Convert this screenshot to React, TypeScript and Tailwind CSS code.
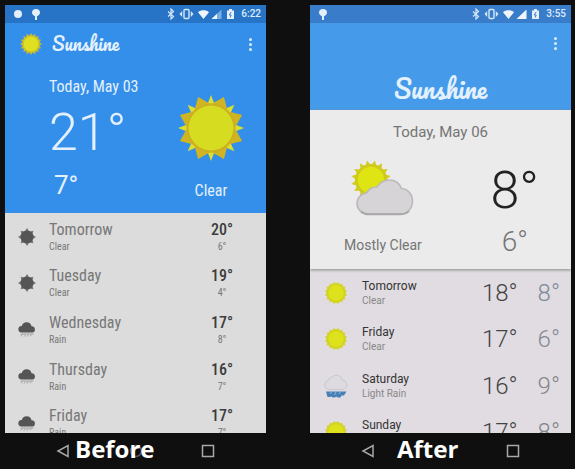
import type { ReactNode } from 'react';

const CONDENSED = "font-['Roboto_Condensed','Roboto','Liberation_Sans',sans-serif]";

type Kind = 'sun' | 'rain';

function spikes(count: number, outer: number, inner: number, turn: number) {
  const points: string[] = [];
  for (let i = 0; i < count * 2; i++) {
    const r = i % 2 === 0 ? outer : inner;
    const a = (Math.PI * i) / count + turn;
    points.push(`${(50 + r * Math.sin(a)).toFixed(2)},${(50 - r * Math.cos(a)).toFixed(2)}`);
  }
  return points.join(' ');
}

function BigSun() {
  return (
    <svg viewBox="0 0 100 100" className="size-[66px]" aria-hidden="true">
      <polygon points={spikes(8, 50, 26, 0)} fill="#dcdf2c" />
      <polygon points={spikes(8, 51, 36, Math.PI / 8)} fill="#d0b422" />
      <circle cx="50" cy="50" r="37" fill="#cdb022" />
      <circle cx="50" cy="50" r="34" fill="#d6dc20" />
    </svg>
  );
}

function LogoSun() {
  return (
    <svg viewBox="0 0 100 100" className="size-[22px]" aria-hidden="true">
      <polygon points={spikes(16, 50, 39, 0)} fill="#c2b83a" />
      <circle cx="50" cy="50" r="38" fill="#d2c426" />
      <circle cx="50" cy="50" r="33" fill="#dfe021" />
    </svg>
  );
}

function GreySun() {
  return (
    <svg viewBox="0 0 100 100" className="size-[18px]" aria-hidden="true">
      <polygon points={spikes(8, 50, 33, 0)} fill="#777" />
      <circle cx="50" cy="50" r="36" fill="#555" />
    </svg>
  );
}

function GreyRain() {
  return (
    <svg viewBox="0 0 18 17" className="h-[17px] w-[18px]" aria-hidden="true">
      <path d="M3.500 11.500a3.300 3.300 0 0 1 .3-6.600A5 5 0 0 1 13.500 5.200a3.200 3.200 0 0 1 1 6.300z" fill="#555" />
      <path d="M2.500 13h13M3 15.200l1.500-1.800M6 15.600l1.500-2M9 15.600l1.500-2M12 15.200l1.500-1.800" stroke="#a2a2a2" strokeWidth="1" fill="none" />
    </svg>
  );
}

function YellowSun() {
  return (
    <svg viewBox="0 0 100 100" className="size-[22px]" aria-hidden="true">
      <polygon points={spikes(16, 51, 43, Math.PI / 16)} fill="#d4d23a" />
      <circle cx="50" cy="50" r="43" fill="#d2d420" />
      <circle cx="50" cy="50" r="35" fill="#dde21c" />
    </svg>
  );
}

function BlueRain() {
  return (
    <svg viewBox="0 0 26 26" className="size-[26px]" aria-hidden="true">
      <path d="M5.500 16.500a4.500 4.500 0 0 1-.5-8.800 4 4 0 0 1 4-3.400 5.600 5.600 0 0 1 10 2.700 4.900 4.900 0 0 1 1.500 9.500z" fill="#dedbe0" stroke="#c8c6cf" strokeWidth="1" />
      <path d="M3 18.500h20.500l-2.500 4h-2.500l-1 2h-3l-1-1-2 1h-2l-1-1-2 .5H4.500z" fill="#4680b6" />
      <path d="M7 21l1.500-2M11.500 22l1.500-3M16 21l1.500-2" stroke="#a9c4dd" strokeWidth=".8" />
    </svg>
  );
}

function PartlyCloudy() {
  return (
    <svg viewBox="0 0 64 56" className="h-14 w-16" aria-hidden="true">
      <svg x="0" y="0" width="40" height="40" viewBox="0 0 100 100">
        <polygon points={spikes(16, 50, 37, Math.PI / 16)} fill="#d3cc25" />
        <circle cx="50" cy="50" r="40" fill="#d0ca1c" />
        <circle cx="50" cy="50" r="33" fill="#dfe413" />
      </svg>
      <path d="M18 54C10.500 54 6 49 6 43.500c0-6 4.500-10 9.500-10.500C18 28.500 22 27 26 27 29 22.500 33 20 38 20c6 0 10.500 3 12.500 8.500C57 29 61.500 34.500 61.500 41c0 8-5.500 13-12.500 13z" fill="#d6d4d6" stroke="#bbb9bc" strokeWidth="1.600" />
      <path d="M10 51.500c2 2 5 2.800 8 2.800h31c4 0 7-1.300 9-3.500" fill="none" stroke="#a9a7aa" strokeWidth="2" />
    </svg>
  );
}

function Balloon() {
  return (
    <svg viewBox="0 0 8 11" className="h-[11px] w-2" aria-hidden="true">
      <path d="M4 0a4 3.800 0 0 1 4 3.700C8 5.500 6 6.500 5 7.200V11H3V7.200C2 6.500 0 5.500 0 3.700A4 3.800 0 0 1 4 0z" fill="#e3f0fb" />
    </svg>
  );
}

function StatusIcons({ weakSignal }: { weakSignal: boolean }) {
  return (
    <svg viewBox="0 0 70 12" className="h-3 w-[70px]" aria-hidden="true">
      <path d="M1 3.500l5.500 5L4 11V1l2.500 2.500-5.500 5" fill="none" stroke="#d5e7f8" strokeWidth="1.200" />
      <rect x="17" y="1.500" width="5" height="9" rx="1" fill="none" stroke="#d5e7f8" strokeWidth="1.400" />
      <path d="M15.200 3v6l-2.700-3zM23.800 3v6l2.700-3z" fill="#d5e7f8" />
      <path d="M31 4.200C34 1.600 39 1.600 42 4.200L36.500 11z" fill="#f0f5fc" />
      <path d="M54.500 1.500v9.500h-10z" fill={weakSignal ? '#77aee6' : '#f0f5fc'} />
      {weakSignal && <path d="M50 5.800V11h-5.500z" fill="#f0f5fc" />}
      <path d="M60 2.500h2V1h3v1.500h2V11h-7z" fill="#e6f0fb" />
      <path d="M64.200 4l-2 3h2l-1 2.500" fill="none" stroke="#3a7fc9" strokeWidth="1" />
    </svg>
  );
}

function StatusBar({ time, tone, dot }: { time: string; tone: string; dot: boolean }) {
  return (
    <div className={`flex h-[18px] items-center gap-[10px] pr-[5px] pl-[9px] ${tone}`}>
      {dot && <span className="size-2 rounded-full bg-[#e3f0fb]" />}
      <Balloon />
      <div className="ml-auto flex items-center gap-1">
        <StatusIcons weakSignal={dot} />
        <span className="font-['Roboto','Liberation_Sans',sans-serif] text-[10px] leading-3 font-medium text-[#dcebfa]">{time}</span>
      </div>
    </div>
  );
}

function MenuButton() {
  return (
    <button type="button" aria-label="More options" className="flex h-6 w-4 flex-col items-center justify-center gap-[2px]">
      <span className="size-[3px] rounded-full bg-[#dcecfa]" />
      <span className="size-[3px] rounded-full bg-[#dcecfa]" />
      <span className="size-[3px] rounded-full bg-[#dcecfa]" />
    </button>
  );
}

function Phone({ caption, captionPlace, children }: { caption: string; captionPlace: string; children: ReactNode }) {
  return (
    <section className="min-w-0">
      <div className="h-[428px] overflow-hidden">{children}</div>
      <div className="relative">
        <nav className="flex h-9 items-center justify-between px-[51px]">
          <button type="button" aria-label="Back">
            <svg viewBox="0 0 14 14" className="size-[14px]" fill="none" stroke="#a8a8a8" strokeWidth="1.500">
              <path d="M12 1.500v11L2 7z" />
            </svg>
          </button>
          <button type="button" aria-label="Home">
            <svg viewBox="0 0 14 14" className="size-[14px]" fill="none" stroke="#555" strokeWidth="1.500">
              <circle cx="7" cy="7" r="5.500" />
            </svg>
          </button>
          <button type="button" aria-label="Recent apps">
            <svg viewBox="0 0 14 14" className="size-[14px]" fill="none" stroke="#a8a8a8" strokeWidth="1.500">
              <rect x="1.500" y="1.500" width="11" height="11" />
            </svg>
          </button>
        </nav>
        <h2 className={`absolute top-0 font-['Open_Sans','Noto_Sans',sans-serif] text-[24px] leading-8 font-bold text-white ${captionPlace}`}>
          {caption}
        </h2>
      </div>
    </section>
  );
}

const before: { day: string; sky: string; high: string; low: string; kind: Kind }[] = [
  { day: 'Tomorrow', sky: 'Clear', high: '20°', low: '6°', kind: 'sun' },
  { day: 'Tuesday', sky: 'Clear', high: '19°', low: '4°', kind: 'sun' },
  { day: 'Wednesday', sky: 'Rain', high: '17°', low: '8°', kind: 'rain' },
  { day: 'Thursday', sky: 'Rain', high: '16°', low: '7°', kind: 'rain' },
  { day: 'Friday', sky: 'Rain', high: '17°', low: '7°', kind: 'rain' },
];

const after: { day: string; sky: string; high: string; low: string; kind: Kind; lowTone: string }[] = [
  { day: 'Tomorrow', sky: 'Clear', high: '18°', low: '8°', kind: 'sun', lowTone: 'text-[#7f8a9a]' },
  { day: 'Friday', sky: 'Clear', high: '17°', low: '6°', kind: 'sun', lowTone: 'text-[#858a96]' },
  { day: 'Saturday', sky: 'Light Rain', high: '16°', low: '9°', kind: 'rain', lowTone: 'text-[#85858c]' },
  { day: 'Sunday', sky: 'Clear', high: '17°', low: '8°', kind: 'sun', lowTone: 'text-[#85858c]' },
];

function BeforeScreen() {
  return (
    <div className={`bg-[#dcdcdc] ${CONDENSED}`}>
      <header className="h-52 bg-[#348fea] text-[#e4f1fd]">
        <StatusBar time="6:22" tone="bg-[#2773c5]" dot />
        <div className="flex h-[42px] items-center pr-2 pl-[15px]">
          <LogoSun />
          <h1 className="ml-[10px] flex-1 font-['Pacifico','Liberation_Serif',cursive] text-[18px] leading-6 font-normal">Sunshine</h1>
          <MenuButton />
        </div>
        <div className="flex justify-between pr-[22px] pl-11">
          <div>
            <p className="mt-3 text-[16px] leading-5">Today, May 03</p>
            <div className="font-['Roboto','Liberation_Sans',sans-serif]">
              <p className="mt-2 text-[52px] leading-[56px] font-light">21°</p>
              <p className="mt-2 ml-[5px] text-[26px] leading-8">7°</p>
            </div>
          </div>
          <div className="flex flex-col items-center pt-[30px]">
            <BigSun />
            <p className="mt-5 text-[16px] leading-5">Clear</p>
          </div>
        </div>
      </header>
      <ul className="grid h-[233px] grid-rows-5">
        {before.map((d) => (
          <li key={d.day} className="flex items-center pt-px pr-7 pl-[13px]">
            {d.kind === 'sun' ? <GreySun /> : <GreyRain />}
            <div className="ml-[13px] flex-1 text-[#777]">
              <p className="text-[16px] leading-5">{d.day}</p>
              <p className="text-[10px] leading-[14px]">{d.sky}</p>
            </div>
            <div className="w-8 text-center">
              <p className="text-[16px] leading-5 font-medium text-[#3c3c3c]">{d.high}</p>
              <p className="text-[10px] leading-[14px] text-[#777]">{d.low}</p>
            </div>
          </li>
        ))}
      </ul>
    </div>
  );
}

function AfterScreen() {
  return (
    <div className="bg-[#e0dce1]">
      <header className="h-[105px] bg-[#459bea] text-[#e4f1fd]">
        <StatusBar time="3:55" tone="bg-[#397dca]" dot={false} />
        <div className="flex h-10 items-center justify-end pr-2">
          <MenuButton />
        </div>
        <h1 className="text-center font-['Pacifico','Liberation_Serif',cursive] text-[25px] leading-[50px] font-normal">Sunshine</h1>
      </header>
      <div className="relative h-[159px] bg-[#ebebeb] pt-3 text-center text-[#757575] shadow-[0_1px_3px_#888]">
        <p className="text-[15px] leading-5">Today, May 06</p>
        <div className="mt-[18px] flex justify-between pr-8 pl-[34px]">
          <div className="flex flex-col items-center">
            <PartlyCloudy />
            <p className="mt-[19px] text-[14px] leading-5">Mostly Clear</p>
          </div>
          <div>
            <p className="text-[52px] leading-[62px] font-light text-[#222]">8°</p>
            <p className="mt-1 text-[28px] leading-8 font-light">6°</p>
          </div>
        </div>
      </div>
      <ul className="grid h-[186px] grid-rows-4">
        {after.map((d) => (
          <li key={d.day} className="flex items-center pt-px pr-[11px] pl-[13px]">
            <div className="flex w-[26px] justify-center">{d.kind === 'sun' ? <YellowSun /> : <BlueRain />}</div>
            <div className="ml-[13px] flex-1">
              <p className="text-[12px] leading-4 text-[#333]">{d.day}</p>
              <p className="text-[10px] leading-[14px] text-[#888]">{d.sky}</p>
            </div>
            <p className="text-[24px] leading-7 font-light text-[#444]">{d.high}</p>
            <p className={`ml-5 text-[24px] leading-7 font-light ${d.lowTone}`}>{d.low}</p>
          </li>
        ))}
      </ul>
    </div>
  );
}

export default function App() {
  return (
    <main className="grid min-h-screen grid-cols-2 gap-11 bg-[#0f0f0f] pt-[5px] pr-1 pl-[5px] font-['Roboto','Liberation_Sans',sans-serif]">
      <Phone caption="Before" captionPlace="left-[70px]">
        <BeforeScreen />
      </Phone>
      <Phone caption="After" captionPlace="left-[87px]">
        <AfterScreen />
      </Phone>
    </main>
  );
}
